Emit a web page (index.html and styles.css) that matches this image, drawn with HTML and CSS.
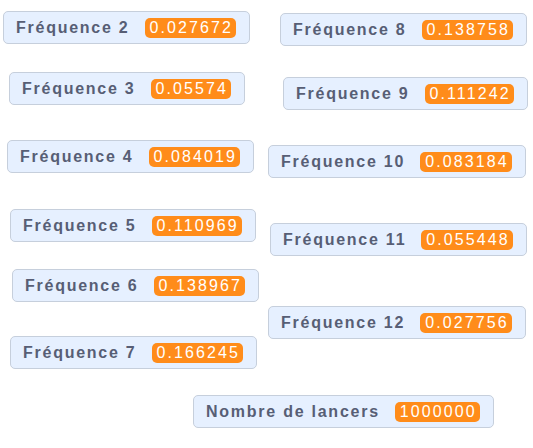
FILE: index.html
```html
<!DOCTYPE html>
<html lang="fr">
<head>
<meta charset="utf-8">
<title>Moniteurs</title>
<link rel="stylesheet" href="styles.css">
</head>
<body>
<div class="stage">
  <div class="monitor m-f2"><span class="label">Fréquence 2</span><span class="value">0.027672</span></div>
  <div class="monitor m-f8"><span class="label">Fréquence 8</span><span class="value">0.138758</span></div>
  <div class="monitor m-f3"><span class="label">Fréquence 3</span><span class="value">0.05574</span></div>
  <div class="monitor m-f9"><span class="label">Fréquence 9</span><span class="value">0.111242</span></div>
  <div class="monitor m-f4"><span class="label">Fréquence 4</span><span class="value">0.084019</span></div>
  <div class="monitor m-f10"><span class="label">Fréquence 10</span><span class="value">0.083184</span></div>
  <div class="monitor m-f5"><span class="label">Fréquence 5</span><span class="value">0.110969</span></div>
  <div class="monitor m-f11"><span class="label">Fréquence 11</span><span class="value">0.055448</span></div>
  <div class="monitor m-f6"><span class="label">Fréquence 6</span><span class="value">0.138967</span></div>
  <div class="monitor m-f12"><span class="label">Fréquence 12</span><span class="value">0.027756</span></div>
  <div class="monitor m-f7"><span class="label">Fréquence 7</span><span class="value">0.166245</span></div>
  <div class="monitor m-n"><span class="label">Nombre de lancers</span><span class="value">1000000</span></div>
</div>
</body>
</html>
```

FILE: styles.css
```css
html, body {
  margin: 0;
  padding: 0;
  background: #ffffff;
}

.stage {
  position: relative;
  width: 533px;
  height: 448px;
  overflow: hidden;
  font-family: "Liberation Sans", Arial, sans-serif;
}

.monitor {
  position: absolute;
  display: flex;
  align-items: center;
  gap: 15px;
  padding: 5px 13px 5px 12px;
  background: #e6f0ff;
  border: 1px solid #c6cfdc;
  border-radius: 5px;
  box-sizing: border-box;
  height: 33px;
}

.label {
  font-size: 16px;
  font-weight: bold;
  color: #575e75;
  letter-spacing: 1.75px;
  white-space: nowrap;
}

.value {
  background: #ff8c1a;
  color: #ffffff;
  font-size: 16px;
  letter-spacing: 2.1px;
  line-height: 20px;
  height: 20px;
  padding: 0 3px 0 5px;
  border-radius: 5px;
  white-space: nowrap;
}

.m-f2 { left: 3px; top: 11px; }
.m-f8 { left: 280px; top: 13px; }
.m-f3 { left: 9px; top: 72px; }
.m-f9 { left: 283px; top: 77px; }
.m-f4 { left: 7px; top: 140px; }
.m-f10 { left: 268px; top: 145px; }
.m-f5 { left: 10px; top: 209px; }
.m-f11 { left: 270px; top: 223px; }
.m-f6 { left: 12px; top: 269px; }
.m-f12 { left: 268px; top: 306px; }
.m-f7 { left: 10px; top: 336px; }
.m-n { left: 193px; top: 395px; }
```
